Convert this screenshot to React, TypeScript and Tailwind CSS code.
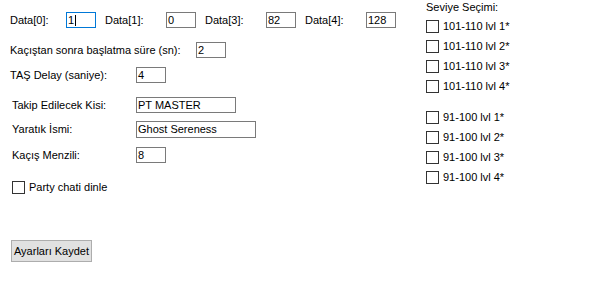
import React from 'react';

const font = { fontFamily: '"Liberation Sans", Arial, sans-serif' };

// kutu: WinForms tarzı metin kutusu
const Box: React.FC<{ w: string; h?: string; value: string; focused?: boolean }> = ({ w, h = 'h-[16px]', value, focused }) => (
  <div
    className={`${w} ${h} shrink-0 border flex items-center pl-[1px] text-[11px] leading-none text-black bg-white ${
      focused ? 'border-[#0078d7]' : 'border-[#7a7a7a]'
    }`}
  >
    <span>{value}</span>
    {focused && <span className="w-px h-[11px] bg-black ml-[1px]" />}
  </div>
);

const Check: React.FC<{ label: string }> = ({ label }) => (
  <div className="flex items-center h-[13px]">
    <div className="w-[13px] h-[13px] shrink-0 border border-[#333333] bg-white" />
    <span className="ml-[4px] leading-[13px] whitespace-nowrap">{label}</span>
  </div>
);

export default function App() {
  return (
    <div className="w-[616px] h-[283px] bg-white flex text-[11px] text-black overflow-hidden" style={font}>
      <div className="w-[416px] shrink-0 flex flex-col pl-[10px]">
        <div className="mt-[12px] flex items-center h-[16px]">
          <span className="w-[56px] shrink-0">Data[0]:</span>
          <Box w="w-[30px]" value="1" focused />
          <span className="ml-[9px] w-[61px] shrink-0">Data[1]:</span>
          <Box w="w-[30px]" value="0" />
          <span className="ml-[9px] w-[61px] shrink-0">Data[3]:</span>
          <Box w="w-[30px]" value="82" />
          <span className="ml-[9px] w-[61px] shrink-0">Data[4]:</span>
          <Box w="w-[30px]" value="128" />
        </div>

        <div className="mt-[14px] flex items-center h-[16px]">
          <span className="w-[186px] shrink-0">Kaçıştan sonra başlatma süre (sn):</span>
          <Box w="w-[30px]" value="2" />
        </div>

        <div className="mt-[9px] flex items-center h-[16px]">
          <span className="w-[126px] shrink-0">TAŞ Delay (saniye):</span>
          <Box w="w-[30px]" value="4" />
        </div>

        <div className="mt-[14px] flex items-center h-[16px] pl-[2px]">
          <span className="w-[124px] shrink-0">Takip Edilecek Kisi:</span>
          <Box w="w-[100px]" value="PT MASTER" />
        </div>

        <div className="mt-[8px] flex items-center h-[17px] pl-[2px]">
          <span className="w-[124px] shrink-0">Yaratık İsmi:</span>
          <Box w="w-[120px]" h="h-[17px]" value="Ghost Sereness" />
        </div>

        <div className="mt-[9px] flex items-center h-[16px] pl-[2px]">
          <span className="w-[124px] shrink-0">Kaçış Menzili:</span>
          <Box w="w-[30px]" value="8" />
        </div>

        <div className="mt-[18px] pl-[2px]">
          <Check label="Party chati dinle" />
        </div>

        <div className="mt-[46px] pl-[1px]">
          <button className="w-[81px] h-[22px] bg-[#e1e1e1] border border-[#adadad] text-[11px] leading-none text-black flex items-center justify-center">
            Ayarları Kaydet
          </button>
        </div>
      </div>

      <div className="flex flex-col pl-[10px] pt-[1px]">
        <span className="leading-[13px] whitespace-nowrap">Seviye Seçimi:</span>
        <div className="mt-[6px] flex flex-col gap-[7px]">
          <Check label="101-110 lvl 1*" />
          <Check label="101-110 lvl 2*" />
          <Check label="101-110 lvl 3*" />
          <Check label="101-110 lvl 4*" />
        </div>
        <div className="mt-[18px] flex flex-col gap-[7px]">
          <Check label="91-100 lvl 1*" />
          <Check label="91-100 lvl 2*" />
          <Check label="91-100 lvl 3*" />
          <Check label="91-100 lvl 4*" />
        </div>
      </div>
    </div>
  );
}
